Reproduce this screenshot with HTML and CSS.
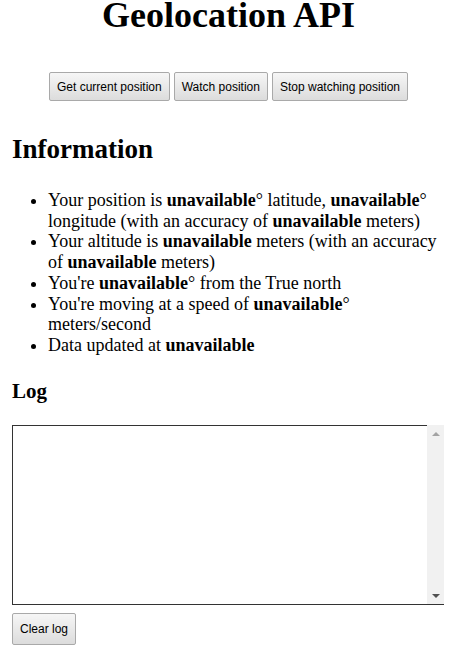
FILE: index.html
```html
<!DOCTYPE html>
<html lang="en">
<head>
<meta charset="utf-8">
<title>Geolocation API</title>
<link rel="stylesheet" href="styles.css">
</head>
<body>
<h1 class="title">Geolocation API</h1>
<div class="actions">
  <button class="btn">Get current position</button>
  <button class="btn">Watch position</button>
  <button class="btn">Stop watching position</button>
</div>
<h2 class="section">Information</h2>
<ul class="info">
  <li>Your position is <b>unavailable</b>° latitude, <b>unavailable</b>° longitude (with an accuracy of <b>unavailable</b> meters)</li>
  <li>Your altitude is <b>unavailable</b> meters (with an accuracy of <b>unavailable</b> meters)</li>
  <li>You're <b>unavailable</b>° from the True north</li>
  <li>You're moving at a speed of <b>unavailable</b>° meters/second</li>
  <li>Data updated at <b>unavailable</b></li>
</ul>
<h3 class="subsection">Log</h3>
<div class="log">
  <div class="log-area"></div>
  <div class="scrollbar">
    <span class="arrow arrow-up"></span>
    <span class="arrow arrow-down"></span>
  </div>
</div>
<button class="btn btn-clear">Clear log</button>
</body>
</html>
```

FILE: styles.css
```css
html, body {
  margin: 0;
  padding: 0;
  background: #fff;
}
body {
  padding: 0 12px;
  font-family: "Liberation Serif", "Times New Roman", serif;
  font-size: 18px;
  color: #000;
}
.title {
  margin: 0;
  font-size: 36px;
  line-height: 30px;
  text-align: center;
  font-weight: bold;
}
.actions {
  margin-top: 42px;
  display: flex;
  justify-content: center;
  gap: 4px;
}
.btn {
  font-family: "Liberation Sans", Arial, sans-serif;
  font-size: 12px;
  color: #000;
  height: 29px;
  padding: 0 7px;
  border: 1px solid #a9a9a9;
  border-radius: 2px;
  background: linear-gradient(#f6f6f6, #dcdcdc);
  line-height: 14px;
}
.section {
  margin: 33px 0 0;
  font-size: 27px;
  line-height: 31px;
  font-weight: bold;
}
.info {
  margin: 25px 0 0;
  padding-left: 36px;
  line-height: 20.7px;
}
.subsection {
  margin: 23px 0 0;
  font-size: 21px;
  line-height: 24px;
  font-weight: bold;
}
.log {
  margin-top: 22px;
  width: 432px;
  height: 180px;
  display: flex;
  box-sizing: border-box;
}
.log-area {
  flex: 1;
  border-top: 1px solid #333;
  border-left: 1px solid #333;
  border-bottom: 1px solid #333;
}
.scrollbar {
  width: 17px;
  background: #f1f1f1;
  border-bottom: 1px solid #333;
  display: flex;
  flex-direction: column;
  justify-content: space-between;
  align-items: center;
  padding: 7px 0 6px;
}
.arrow {
  width: 0;
  height: 0;
  border-left: 4px solid transparent;
  border-right: 4px solid transparent;
}
.arrow-up {
  border-bottom: 4px solid #a3a3a3;
}
.arrow-down {
  border-top: 4px solid #505050;
}
.btn-clear {
  display: block;
  margin-top: 8px;
  height: 32px;
  padding: 0 7px;
}
```
